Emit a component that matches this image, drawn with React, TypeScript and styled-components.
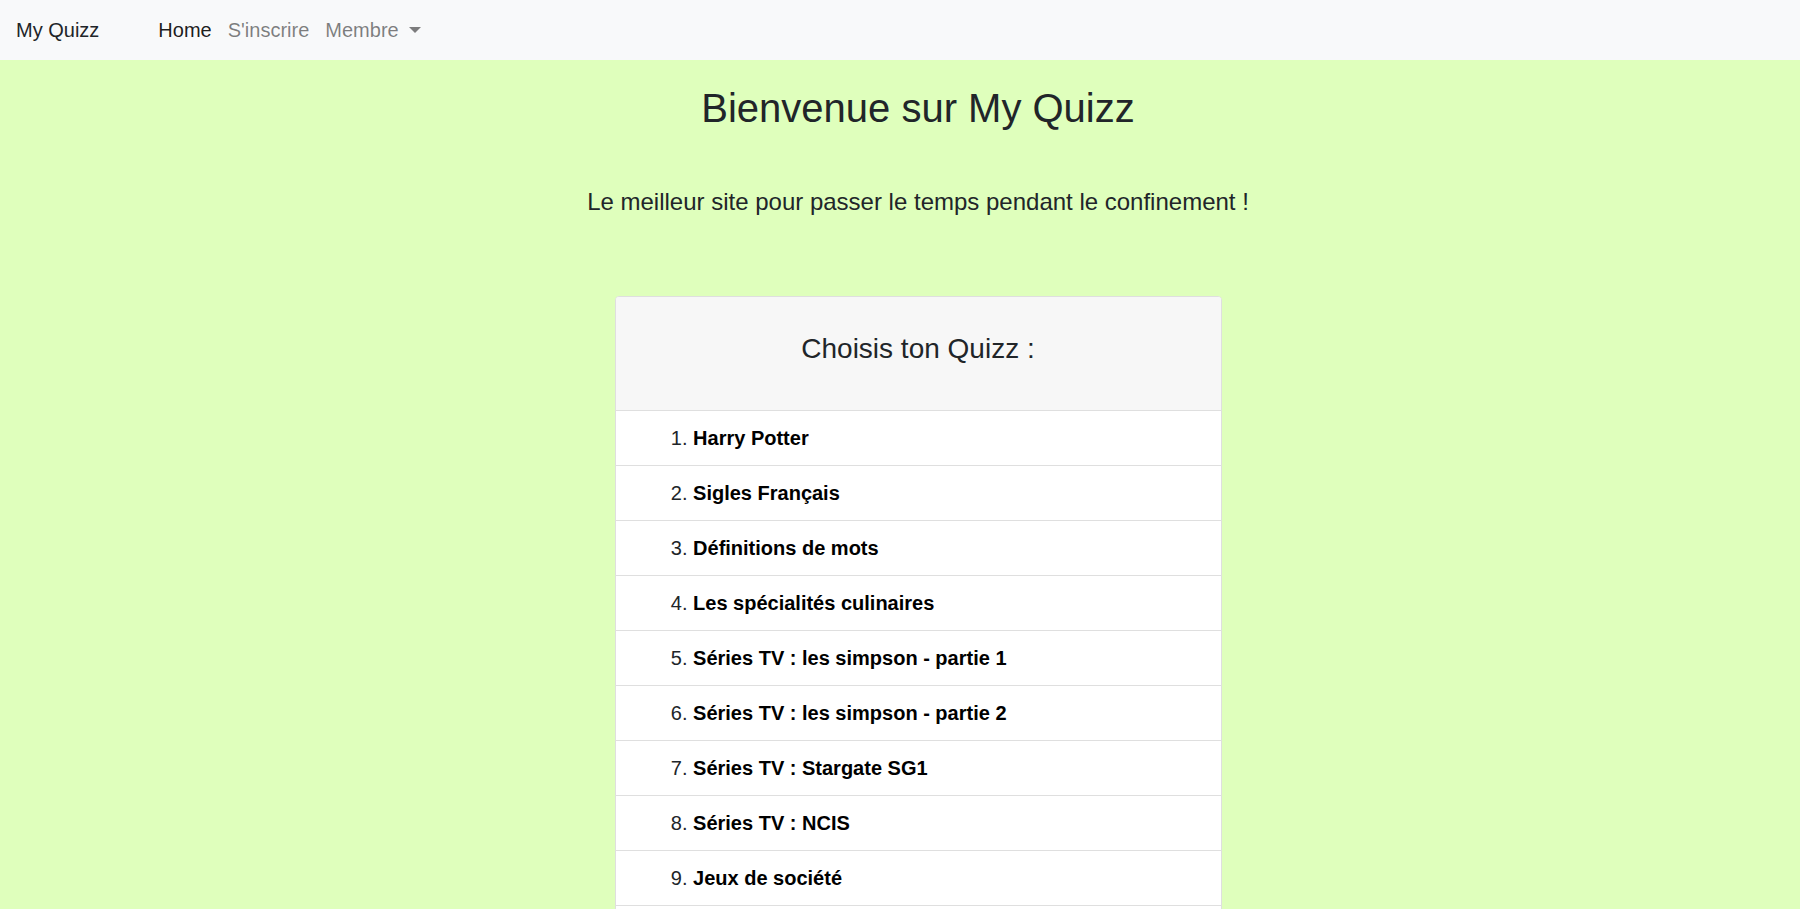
import React from "react";
import styled, { createGlobalStyle } from "styled-components";

const GlobalStyle = createGlobalStyle`
  html, body {
    margin: 0;
    padding: 0;
  }
  body {
    font-family: "Liberation Sans", Arial, sans-serif;
    font-size: 20px;
    line-height: 1.5;
    color: #212529;
    background: #dfffbc;
  }
  * { box-sizing: border-box; }
`;

const Navbar = styled.nav`
  display: flex;
  align-items: center;
  height: 60px;
  padding: 0 16px;
  background: #f8f9fa;
`;

const Brand = styled.a`
  font-size: 20px;
  line-height: 30px;
  color: #212529;
  text-decoration: none;
  margin-right: 51px;
`;

const NavList = styled.ul`
  display: flex;
  align-items: center;
  list-style: none;
  margin: 0;
  padding: 0;
`;

const NavLink = styled.a<{ $active?: boolean }>`
  display: flex;
  align-items: center;
  padding: 0 8px;
  font-size: 20px;
  line-height: 30px;
  text-decoration: none;
  color: ${(p) => (p.$active ? "rgba(0, 0, 0, 0.9)" : "rgba(0, 0, 0, 0.5)")};
`;

const Caret = styled.span`
  display: inline-block;
  width: 0;
  height: 0;
  margin-left: 10px;
  margin-top: -1px;
  border-top: 6px solid rgba(0, 0, 0, 0.5);
  border-left: 6px solid transparent;
  border-right: 6px solid transparent;
`;

const Main = styled.main`
  display: flex;
  flex-direction: column;
  align-items: center;
  padding: 24px 0 40px 36px;
`;

const Title = styled.h1`
  margin: 0 0 52px;
  font-size: 40px;
  font-weight: 400;
  line-height: 48px;
  color: #212529;
`;

const Lead = styled.p`
  margin: 0 0 76px;
  font-size: 24px;
  line-height: 36px;
  font-weight: 400;
`;

const Card = styled.section`
  width: 607px;
  background: #fff;
  border: 1px solid #dfdfdf;
  border-radius: 4px;
  overflow: hidden;
`;

const CardHeader = styled.header`
  padding: 35px 20px 36px;
  background: #f7f7f7;
  border-bottom: 1px solid #dfdfdf;
  text-align: center;
`;

const CardTitle = styled.h3`
  margin: 0 0 8px;
  font-size: 28px;
  font-weight: 400;
  line-height: 33.6px;
  color: #212529;
`;

const QuizList = styled.ol`
  list-style: none;
  margin: 0;
  padding: 0;
`;

const QuizRow = styled.li`
  padding: 12px 20px 12px 0;
  font-size: 20px;
  line-height: 30px;
  border-bottom: 1px solid #dfdfdf;
  &:last-child {
    border-bottom: none;
  }
`;

const Num = styled.span`
  display: inline-block;
  width: 72px;
  text-align: right;
  color: #212529;
`;

const QuizName = styled.a`
  font-weight: 700;
  color: #000;
  text-decoration: none;
`;

const quizzes = [
  "Harry Potter",
  "Sigles Français",
  "Définitions de mots",
  "Les spécialités culinaires",
  "Séries TV : les simpson - partie 1",
  "Séries TV : les simpson - partie 2",
  "Séries TV : Stargate SG1",
  "Séries TV : NCIS",
  "Jeux de société",
  "Culture générale",
];

export default function App() {
  return (
    <>
      <GlobalStyle />
      <Navbar>
        <Brand href="#">My Quizz</Brand>
        <NavList>
          <li>
            <NavLink href="#" $active>
              Home
            </NavLink>
          </li>
          <li>
            <NavLink href="#">S'inscrire</NavLink>
          </li>
          <li>
            <NavLink href="#">
              Membre
              <Caret />
            </NavLink>
          </li>
        </NavList>
      </Navbar>
      <Main>
        <Title>Bienvenue sur My Quizz</Title>
        <Lead>Le meilleur site pour passer le temps pendant le confinement !</Lead>
        <Card>
          <CardHeader>
            <CardTitle>Choisis ton Quizz :</CardTitle>
          </CardHeader>
          <QuizList>
            {quizzes.map((q, i) => (
              <QuizRow key={q}>
                <Num>{i + 1}.</Num> <QuizName href="#">{q}</QuizName>
              </QuizRow>
            ))}
          </QuizList>
        </Card>
      </Main>
    </>
  );
}
